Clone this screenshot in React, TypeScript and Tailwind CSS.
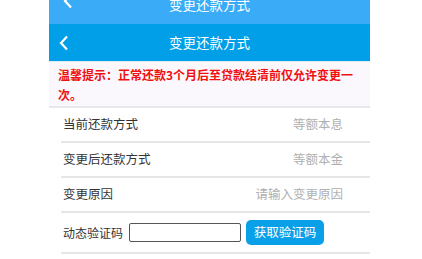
import React from "react";

const font = { fontFamily: '"Noto Sans CJK SC", "Noto Sans", sans-serif' };

function Back() {
  return (
    <svg width="10" height="16" viewBox="0 0 10 16" className="absolute left-[10px]">
      <path d="M8 1.5 L2 8 L8 14.5" fill="none" stroke="#fff" strokeWidth="2.2" />
    </svg>
  );
}

function Row({ label, value }: { label: string; value: string }) {
  return (
    <div className="flex h-[35px] items-center justify-between border-b-2 border-[#e6e6e6] pl-[2px] pr-[27px]">
      <span className="text-[12.5px] text-[#333]">{label}</span>
      <span className="text-[12.5px] text-[#b0b0b0]">{value}</span>
    </div>
  );
}

export default function App() {
  return (
    <div className="h-[259px] w-[422px] overflow-hidden bg-white" style={font}>
      <div className="ml-[49px] w-[321px]">
        {/* previous screen peeking above */}
        <div className="relative h-[24px] overflow-hidden bg-[#3aabf7]">
          <svg width="10" height="16" viewBox="0 0 10 16" className="absolute left-[14px] top-[-7px]">
            <path d="M8 1.5 L2 8 L8 14.5" fill="none" stroke="#fff" strokeWidth="2.2" />
          </svg>
          <div className="relative top-[-6px] text-center text-[13.5px] leading-[20px] text-white">变更还款方式</div>
        </div>
        <div className="relative flex h-[37px] items-center justify-center bg-[#009fe8]">
          <Back />
          <span className="text-[13.5px] text-white">变更还款方式</span>
        </div>
        <div className="border-t border-[#d8ecf8] border-b-2 border-b-[#e8e8e8] bg-[#faf8fd] px-[9px] pb-[1px] pt-[3px] text-[12px] font-bold leading-[20px] text-[#f01010]">
          温馨提示：正常还款3个月后至贷款结清前仅允许变更一次。
        </div>
        <div className="ml-[12px]">
          <Row label="当前还款方式" value="等额本息" />
          <Row label="变更后还款方式" value="等额本金" />
          <Row label="变更原因" value="请输入变更原因" />
          <div className="flex h-[41px] items-center border-b-2 border-[#e6e6e6] pl-[2px]">
            <span className="text-[12px] text-[#333]">动态验证码</span>
            <input className="ml-[6px] h-[19px] w-[112px] rounded-[2px] border border-[#555] bg-white" />
            <button className="ml-[5px] h-[25px] w-[78px] rounded-[5px] bg-[#0aa0e8] text-[12.5px] text-white">
              获取验证码
            </button>
          </div>
        </div>
      </div>
    </div>
  );
}
